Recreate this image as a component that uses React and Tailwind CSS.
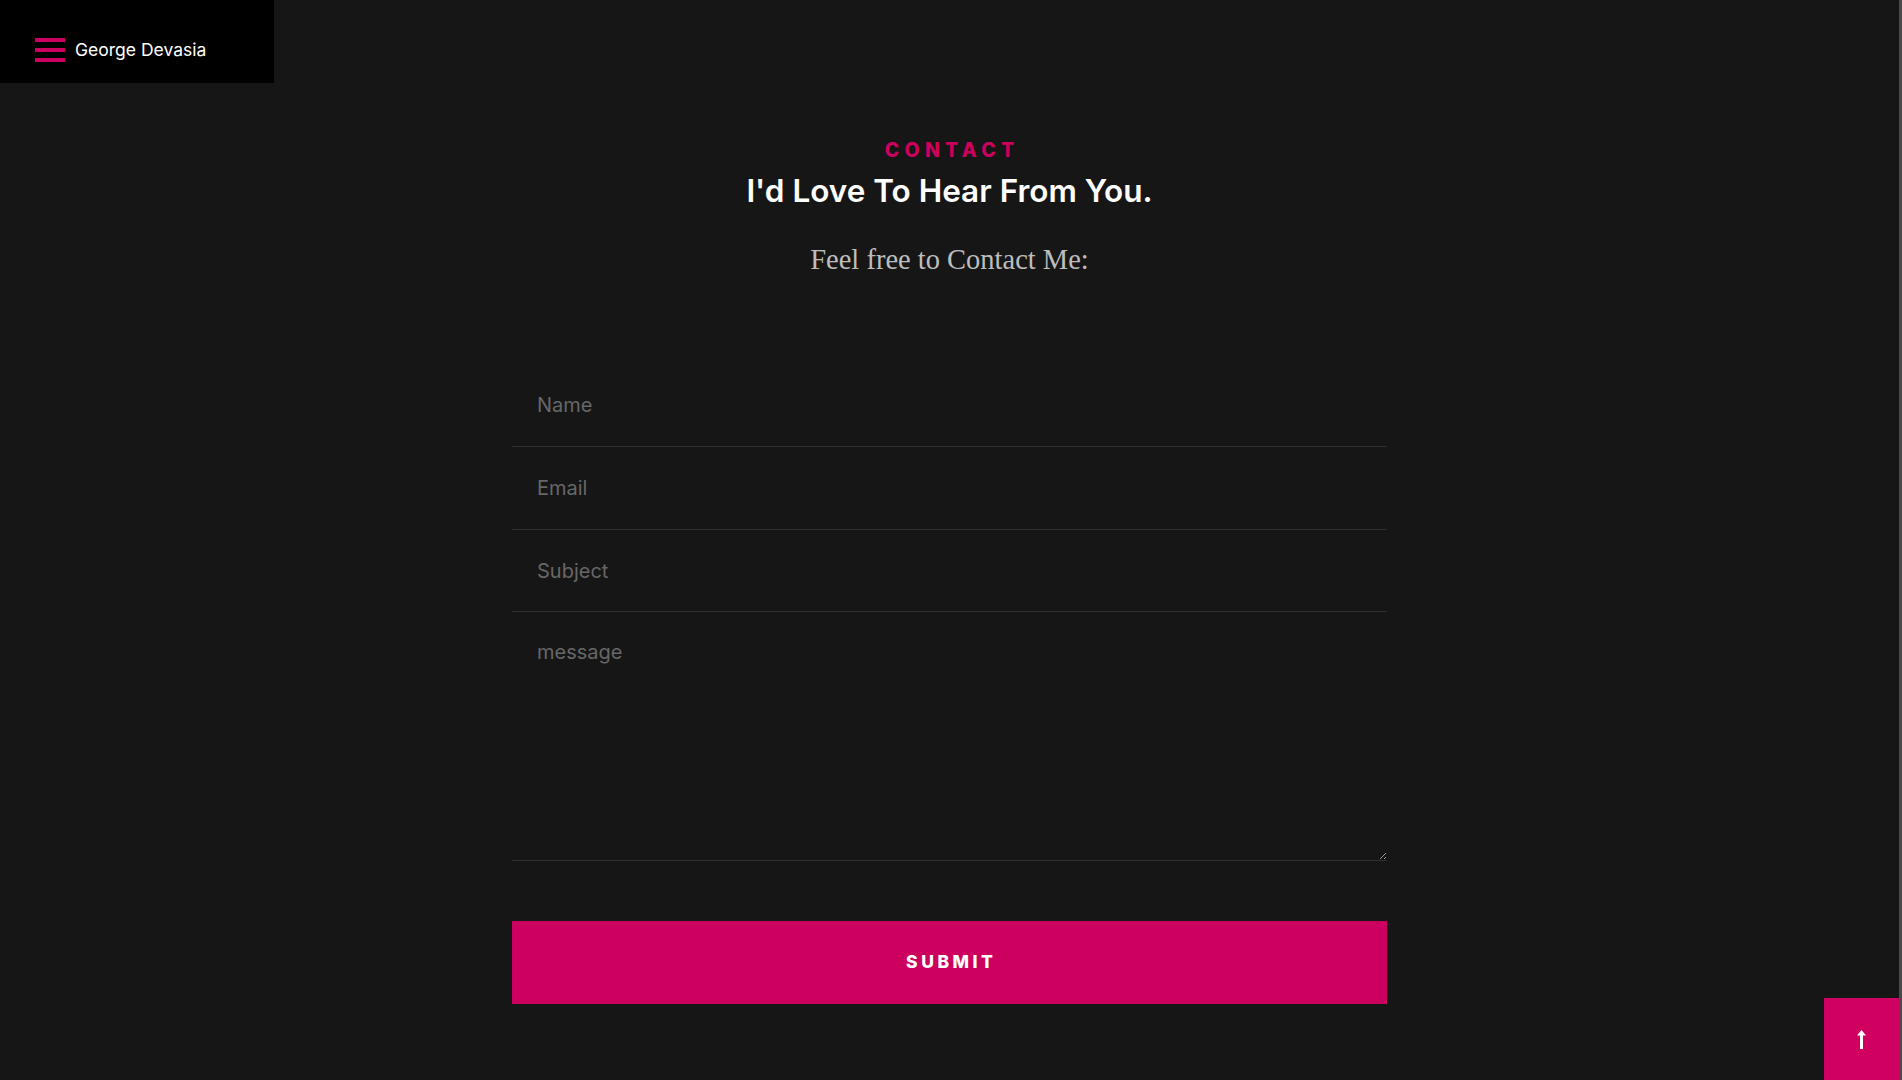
import { useState } from "react";

const fields = [
  { key: "Name", h: "h-[83px]" },
  { key: "Email", h: "h-[83px]" },
  { key: "Subject", h: "h-[82px]" },
];

const App = () => {
  const [form, setForm] = useState({ Name: "", Email: "", Subject: "", message: "" });

  const update = (key) => (e) => setForm((prev) => ({ ...prev, [key]: e.target.value }));

  return (
    <div className="flex h-[1080px] w-full overflow-hidden bg-[#161616]">
      <div className="relative flex-1">
        {/* Navigation */}
        <nav className="flex h-[83px] w-[274px] items-center gap-[10px] bg-black pl-[35px] pt-[17px]">
          <div className="flex w-[30px] flex-col gap-[6px]">
            <span className="block h-[4px] w-full bg-[#cc005e]" />
            <span className="block h-[4px] w-full bg-[#cc005e]" />
            <span className="block h-[4px] w-full bg-[#cc005e]" />
          </div>
          <p className="font-['Inter',sans-serif] text-[17.5px] font-normal text-white">George Devasia</p>
        </nav>

        {/* Contact section */}
        <section className="flex flex-col items-center">
          <p className="mt-[55px] font-['Inter',sans-serif] text-[19.5px] font-extrabold leading-[24px] tracking-[0.27em] pl-[0.27em] text-[#cc005e]">
            CONTACT
          </p>
          <h2 className="mt-[9px] font-['Inter',sans-serif] text-[31.5px] font-semibold leading-[40px] text-white">
            I'd Love To Hear From You.
          </h2>
          <p className="mt-[33px] font-['Liberation_Serif',serif] text-[28.5px] leading-[32px] text-[#bdbdbd]">
            Feel free to Contact Me:
          </p>

          <form className="mt-[88px] flex w-[875px] flex-col" onSubmit={(e) => e.preventDefault()}>
            {fields.map((field) => (
              <input
                key={field.key}
                type="text"
                placeholder={field.key}
                value={form[field.key]}
                onChange={update(field.key)}
                className={`${field.h} w-full border-b border-[#2f2f2f] bg-transparent pl-[25px] font-['Inter',sans-serif] text-[20px] text-white outline-none placeholder:text-[#676767]`}
              />
            ))}
            <textarea
              placeholder="message"
              value={form.message}
              onChange={update("message")}
              className="h-[249px] w-full border-b border-[#2f2f2f] bg-transparent pl-[25px] pt-[27px] font-['Inter',sans-serif] text-[20px] leading-[26px] text-white outline-none [color-scheme:dark] placeholder:text-[#676767]"
            />
            <button
              type="submit"
              className="mt-[60px] h-[83px] w-full bg-[#cc005e] font-['Inter',sans-serif] text-[17.5px] font-extrabold tracking-[0.2em] pl-[0.2em] text-white"
            >
              SUBMIT
            </button>
          </form>
        </section>

        {/* Back to top */}
        <a
          href="#"
          className="absolute bottom-0 right-0 flex h-[82px] w-[75px] items-center justify-center bg-[#cf0060]"
        >
          <svg width="9" height="19" viewBox="0 0 9 19" fill="white">
            <polygon points="4.5,0 9,5.5 6,5.5 6,19 3,19 3,5.5 0,5.5" />
          </svg>
        </a>
      </div>
      <div className="w-[3px] bg-[#4a4a4a]" />
    </div>
  );
};

export default App;
